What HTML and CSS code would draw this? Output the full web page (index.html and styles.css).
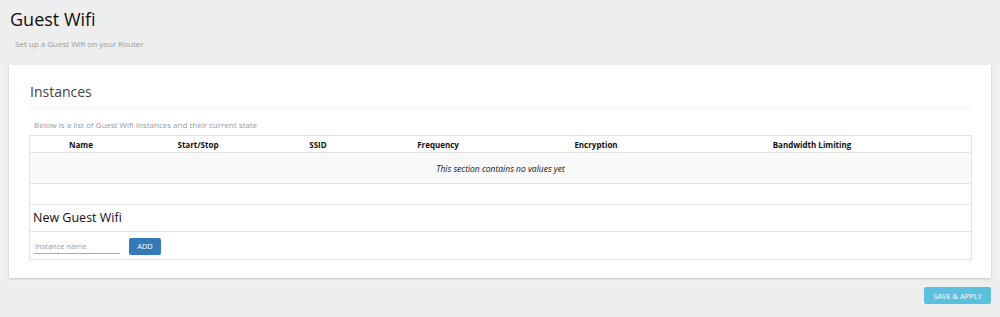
FILE: index.html
```html
<!DOCTYPE html>
<html>
<head>
<meta charset="utf-8">
<link rel="stylesheet" href="styles.css">
</head>
<body>
<div class="page">
  <h1 class="title">Guest Wifi</h1>
  <p class="subtitle">Set up a Guest Wifi on your Router</p>
  <div class="card">
    <h2 class="section-title">Instances</h2>
    <p class="section-desc">Below is a list of Guest Wifi Instances and their current state</p>
    <div class="tbl">
      <table class="grid">
        <colgroup>
          <col class="c1"><col class="c2"><col class="c3"><col class="c4"><col class="c5"><col class="c6"><col class="c7">
        </colgroup>
        <thead>
          <tr class="head">
            <th>Name</th><th>Start/Stop</th><th>SSID</th><th>Frequency</th><th>Encryption</th><th>Bandwidth Limiting</th><th></th>
          </tr>
        </thead>
        <tbody>
          <tr class="empty"><td colspan="7">This section contains no values yet</td></tr>
          <tr class="blank"><td colspan="7"></td></tr>
        </tbody>
      </table>
      <div class="new-title">New Guest Wifi</div>
      <div class="new-row">
        <input class="name-input" type="text" placeholder="Instance name">
        <button class="btn-add">ADD</button>
      </div>
    </div>
  </div>
  <div class="actions">
    <button class="btn-save">SAVE &amp; APPLY</button>
  </div>
</div>
</body>
</html>
```

FILE: styles.css
```css
html, body {
  margin: 0;
  padding: 0;
  background: #eeeeee;
  font-family: "Open Sans", "Noto Sans", sans-serif;
  color: #333;
}
.page {
  padding: 6px 9px 0 9px;
}
.title {
  margin: 0 0 0 1px;
  font-size: 18px;
  font-weight: 400;
  line-height: 26px;
  color: #111;
}
.subtitle {
  margin: 6px 0 0 6px;
  font-size: 8px;
  line-height: 12px;
  color: #999;
}
.card {
  margin-top: 15px;
  width: 982px;
  box-sizing: border-box;
  background: #fff;
  box-shadow: 0 1px 2px rgba(0,0,0,0.18);
  padding: 16px 19px 18px 20px;
}
.section-title {
  margin: 0;
  font-size: 14px;
  font-weight: 400;
  line-height: 22px;
  color: #444;
  padding: 0 0 5px 1px;
  border-bottom: 1px solid #f2f2f2;
}
.section-desc {
  margin: 11px 0 5px 5px;
  font-size: 8px;
  line-height: 10px;
  color: #999;
}
.tbl {
  border: 1px solid #e2e2e2;
}
.grid {
  width: 100%;
  border-collapse: collapse;
  table-layout: fixed;
}
.c1 { width: 102px; }
.c2 { width: 132px; }
.c3 { width: 108px; }
.c4 { width: 132px; }
.c5 { width: 184px; }
.c6 { width: 248px; }
.grid th {
  font-size: 8px;
  font-weight: 700;
  color: #111;
  height: 16px;
  padding: 0;
  text-align: center;
  border-bottom: 1px solid #e2e2e2;
}
.grid .empty td {
  background: #f9f9f9;
  height: 30px;
  text-align: center;
  font-style: italic;
  font-size: 8.5px;
  color: #111;
  padding: 0;
  border-bottom: 1px solid #e2e2e2;
}
.grid .blank td {
  height: 20px;
  padding: 0;
  border-bottom: 1px solid #e2e2e2;
}
.new-title {
  height: 26px;
  line-height: 26px;
  padding-left: 3px;
  font-size: 12.5px;
  color: #111;
  border-bottom: 1px solid #e2e2e2;
}
.new-row {
  display: flex;
  align-items: center;
  gap: 9px;
  height: 27px;
  padding-left: 4px;
}
.name-input {
  width: 86px;
  height: 14px;
  border: 0;
  border-bottom: 1px solid #aaa;
  padding: 0 0 0 1px;
  margin-top: 2px;
  font-family: inherit;
  font-size: 7.5px;
  color: #333;
  outline: none;
  background: transparent;
  box-sizing: border-box;
}
.name-input::placeholder {
  color: #999;
}
.btn-add {
  width: 32px;
  height: 17px;
  border: 0;
  border-radius: 2px;
  background: #337ab7;
  color: #fff;
  font-family: inherit;
  font-size: 7.5px;
  padding: 0;
  margin-top: 1px;
}
.actions {
  display: flex;
  justify-content: flex-end;
  width: 982px;
  margin-top: 9px;
}
.btn-save {
  width: 67px;
  height: 17px;
  border: 0;
  border-radius: 2px;
  background: #5bc0de;
  color: #fff;
  font-family: inherit;
  font-size: 7.5px;
  padding: 0;
}
```
